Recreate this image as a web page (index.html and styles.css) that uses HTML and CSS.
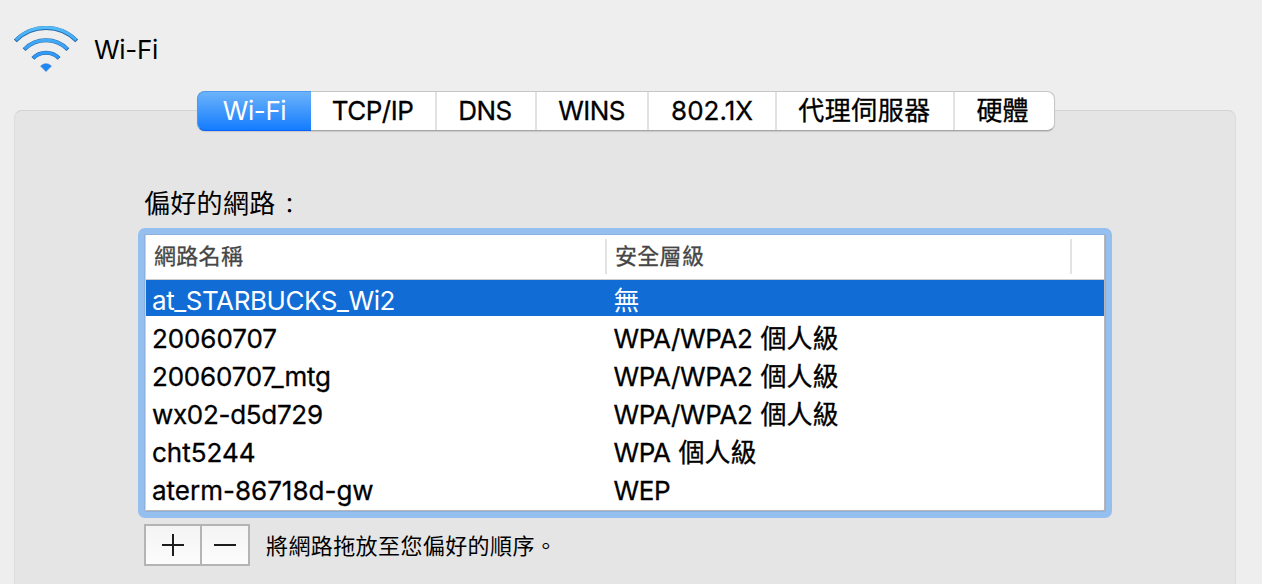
FILE: index.html
```html
<!DOCTYPE html>
<html lang="zh-Hant">
<head>
<meta charset="utf-8">
<title>Wi-Fi</title>
<link rel="stylesheet" href="styles.css">
</head>
<body>
<header class="header">
  <svg class="wifi" width="66" height="48" viewBox="13 25 66 48" fill="none">
    <defs>
      <linearGradient id="arc" gradientUnits="userSpaceOnUse" x1="0" y1="26" x2="0" y2="72">
        <stop offset="0" stop-color="#55bdf8"/>
        <stop offset="1" stop-color="#1a84fa"/>
      </linearGradient>
    </defs>
    <g stroke="#2468a8" stroke-width="4">
      <path d="M15.3 40.8A43 43 0 0 1 76.7 40.8"/>
      <path d="M24.1 49.6A30.5 30.5 0 0 1 67.9 49.6"/>
      <path d="M32.9 58.4A18.1 18.1 0 0 1 59.1 58.4"/>
    </g>
    <g stroke="url(#arc)" stroke-width="3">
      <path d="M15.8 40A43 43 0 0 1 76.2 40"/>
      <path d="M24.6 48.9A30.5 30.5 0 0 1 67.4 48.9"/>
      <path d="M33.4 57.8A18.1 18.1 0 0 1 58.6 57.8"/>
    </g>
    <path d="M40.6 66Q46 61.3 51.4 66L46 71.5Z" fill="#1d87f7" stroke="#2878c8" stroke-width=".6"/>
  </svg>
  <h1 class="title">Wi-Fi</h1>
</header>
<nav class="tabs">
  <span class="tab tab-active">Wi-Fi</span>
  <span class="tab tab-tcp">TCP/IP</span>
  <span class="tab tab-dns">DNS</span>
  <span class="tab tab-wins">WINS</span>
  <span class="tab tab-dot1x">802.1X</span>
  <span class="tab tab-proxy">代理伺服器</span>
  <span class="tab tab-hardware">硬體</span>
</nav>
<main class="panel">
  <h2 class="label">偏好的網路<span class="colon">：</span></h2>
  <section class="table">
    <div class="thead"><span class="th th-name">網路名稱</span><span class="th th-security">安全層級</span><span class="th"></span></div>
    <div class="row row-selected"><span class="name n1">at_STARBUCKS_Wi2</span><span>無</span></div>
    <div class="row"><span class="name n2">20060707</span><span><span class="wpa2">WPA/WPA2</span><span class="level">個人級</span></span></div>
    <div class="row"><span class="name n3">20060707_mtg</span><span><span class="wpa2">WPA/WPA2</span><span class="level">個人級</span></span></div>
    <div class="row"><span class="name n4">wx02-d5d729</span><span><span class="wpa2">WPA/WPA2</span><span class="level">個人級</span></span></div>
    <div class="row"><span class="name">cht5244</span><span><span class="wpa2">WPA</span><span class="level">個人級</span></span></div>
    <div class="row"><span class="name">aterm-86718d-gw</span><span class="wpa2">WEP</span></div>
  </section>
  <footer class="footer">
    <div class="buttons">
      <button class="btn btn-add" aria-label="加入"><svg width="22" height="22"><path d="M0 11H22M11 0V22" stroke="#1c1c1c" stroke-width="2"/></svg></button>
      <button class="btn btn-remove" aria-label="移除"><svg width="22" height="22"><path d="M0 11H22" stroke="#1c1c1c" stroke-width="2"/></svg></button>
    </div>
    <p class="hint">將網路拖放至您偏好的順序。</p>
  </footer>
</main>
</body>
</html>
```
FILE: styles.css
```css
* { box-sizing: border-box; }
body {
  margin: 0;
  height: 584px;
  overflow: hidden;
  background: #eee;
  color: #000;
  font: 26px/36px Inter, "Noto Sans CJK TC", sans-serif;
}
.header { display: flex; height: 91px; padding: 25px 0 0 13px; }
.wifi { display: block; }
.title { margin: 7px 0 0 15px; font-size: 26px; line-height: 36px; font-weight: 400; letter-spacing: -.3px; }
.tabs {
  position: relative;
  z-index: 1;
  display: flex;
  width: 858px;
  height: 40px;
  margin-left: 197px;
  border: 1px solid #c6c6c6;
  border-bottom-color: #a5a5a5;
  border-radius: 8px;
  background: #fff;
  box-shadow: 0 1px 1px rgba(0, 0, 0, .12);
}
.tab { height: 38px; line-height: 38px; text-align: center; border-right: 2px solid #e2e2e2; white-space: nowrap; -webkit-text-stroke: .3px; }
.tab-active {
  width: 114px;
  height: 40px;
  margin: -1px 0 0 -1px;
  line-height: 37px;
  color: #fff;
  letter-spacing: -.4px;
  background: linear-gradient(#6cb3fa, #147cfe);
  border: 1px solid #4a9bf0;
  border-bottom-color: #0a60fa;
  border-right: 0;
  border-radius: 8px 0 0 8px;
  -webkit-text-stroke: 0;
}
.tab-tcp { width: 126px; letter-spacing: -.5px; padding-right: 1px; }
.tab-dns { width: 100px; letter-spacing: -.5px; padding-right: 2px; }
.tab-wins { width: 112px; letter-spacing: -.6px; padding-right: 1px; }
.tab-dot1x { width: 128px; }
.tab-proxy { width: 178px; letter-spacing: .5px; padding-right: 1px; }
.tab-hardware { flex: 1; border-right: 0; padding-right: 4px; }
.panel {
  width: 1222px;
  height: 490px;
  margin: -21px 0 0 14px;
  padding: 75px 0 0 123px;
  background: #e5e5e5;
  border: 1px solid #dcdcdc;
  border-top-color: #d2d2d2;
  border-radius: 8px;
}
.label { height: 36px; margin: 0 0 6px 6px; font-size: 26px; line-height: 36px; font-weight: 400; letter-spacing: .3px; }
.colon { font-size: 22px; line-height: 1; margin-left: 3px; }
.table {
  width: 974px;
  height: 290px;
  border: 6px solid #94bfee;
  border-radius: 7px;
  background: #fff;
  box-shadow: inset 0 0 0 1px #8cb1de, inset 1px 0 0 1px #d0d5dc, inset -2px -2px 0 #b8b8b8;
  padding: 1px 2px 2px 2px;
}
.thead { display: flex; height: 45px; padding-top: 4px; border-bottom: 1px solid #ccc; font-size: 22px; line-height: 34px; color: #464646; letter-spacing: .3px; -webkit-text-stroke: .3px; }
.th { height: 35px; padding-left: 8px; }
.th-name { width: 461px; border-right: 2px solid #e2e2e2; }
.th-security { width: 465px; border-right: 2px solid #e2e2e2; }
.row { display: flex; height: 36px; margin-bottom: 2px; padding: 3px 0 0 6px; white-space: nowrap; -webkit-text-stroke: .3px; }
.row-selected { background: #116cd6; color: #fff; -webkit-text-stroke: 0; }
.row:last-child { height: 34px; margin: 0; }
.name { width: 461.5px; }
.n1 { letter-spacing: -.42px; }
.n2 { letter-spacing: -.1px; }
.n3 { letter-spacing: -.2px; }
.n4 { letter-spacing: -.3px; }
.wpa2 { letter-spacing: -.4px; }
.level { margin-left: 8px; }
.footer { display: flex; padding: 6px 0 0 6px; }
.buttons { display: flex; width: 106px; height: 42px; border: 2px solid #b4b4b4; background: linear-gradient(#f4f4f4, #fcfcfc); }
.btn { display: flex; align-items: center; justify-content: center; width: 46px; margin: 0; padding: 0; border: 0; background: none; }
.btn-add { width: 56px; border-right: 2px solid #b4b4b4; }
.hint { margin: 4px 0 0 16px; font-size: 22px; line-height: 36px; letter-spacing: .4px; }
```
